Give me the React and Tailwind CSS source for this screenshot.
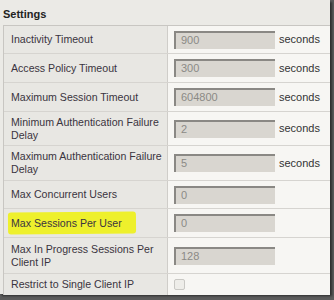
const rows = [
  { label: "Inactivity Timeout", value: "900", unit: "seconds", h: "h-[28px]" },
  { label: "Access Policy Timeout", value: "300", unit: "seconds", h: "h-[29px]" },
  { label: "Maximum Session Timeout", value: "604800", unit: "seconds", h: "h-[29px]" },
  { label: ["Minimum Authentication Failure", "Delay"], value: "2", unit: "seconds", h: "h-[34px]" },
  { label: ["Maximum Authentication Failure", "Delay"], value: "5", unit: "seconds", h: "h-[35px]" },
  { label: "Max Concurrent Users", value: "0", h: "h-[28px]" },
  { label: "Max Sessions Per User", value: "0", h: "h-[29px]", mark: true },
  { label: ["Max In Progress Sessions Per", "Client IP"], value: "128", h: "h-[36px]" },
  { label: "Restrict to Single Client IP", check: true, h: "h-[21px]" },
];

function Label({ label, mark }) {
  const lines = Array.isArray(label) ? label : [label];
  return (
    <div className="relative leading-[13px] whitespace-nowrap text-[10.6px]">
      {mark && (
        <div className="absolute -left-[3px] -top-[5px] w-[128px] h-[22px] bg-[#eef02c] rounded-[3px] -rotate-[0.5deg]" />
      )}
      <div className="relative">
        {lines.map((l, i) => (
          <div key={i}>{l}</div>
        ))}
      </div>
    </div>
  );
}

export default function App() {
  return (
    <div className="w-[334px] h-[300px] bg-[#5c5c5c] font-['Liberation_Sans',Arial,sans-serif] text-[11px] text-[#3a3440] overflow-hidden">
      <div className="w-[330px] h-[294px] bg-[#ebeae6] shadow-[2px_2px_2px_rgba(0,0,0,0.5)]">
        <div className="h-[25px] pl-[3px] pt-[8px] font-bold text-[#222] leading-[12px]">Settings</div>
        <div className="ml-[3px] border-l border-t border-[#c8c6c2]">
          {rows.map((r, i) => (
            <div key={i} className={`flex ${r.h} ${i < rows.length - 1 ? "border-b border-[#d6d4d0]" : ""}`}>
              <div className="w-[164px] bg-[#e8e7e3] border-r border-[#cfcdc9] flex items-center pl-[7px] overflow-hidden">
                <Label label={r.label} mark={r.mark} />
              </div>
              <div className="flex-1 bg-[#f7f6f3] flex items-center pl-[6px]">
                {r.check ? (
                  <div className="w-[11px] h-[11px] rounded-[2px] border border-[#c9c8c4] bg-[#eeede9]" />
                ) : (
                  <>
                    <div className="w-[101px] h-[18px] bg-[#d9d6d0] border-t-2 border-l-2 border-[#8a8884] pl-[5px] text-[#8b8a86] text-[11px] leading-[15px]">
                      {r.value}
                    </div>
                    {r.unit && <span className="ml-[4px] text-[#333]">{r.unit}</span>}
                  </>
                )}
              </div>
            </div>
          ))}
        </div>
      </div>
    </div>
  );
}
